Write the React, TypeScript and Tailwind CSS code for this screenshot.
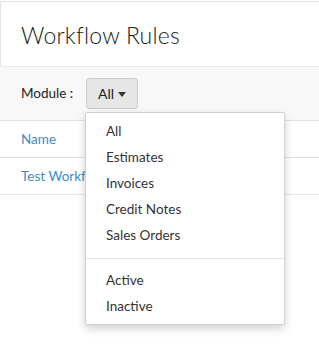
const menuItems = ["All", "Estimates", "Invoices", "Credit Notes", "Sales Orders"];
const statusItems = ["Active", "Inactive"];

const WorkflowRules = () => {
  return (
    <div
      className="relative w-full h-[352px] bg-white pt-px overflow-hidden text-[#333]"
      style={{ fontFamily: "Lato, 'Open Sans', sans-serif" }}
    >
      <div className="h-[65px] border-t border-l border-[#e3e3e3] flex items-center pl-[20px]">
        <h1 className="text-[23px] font-light text-[#1a1a1a] leading-none mt-[3px] tracking-[0.2px]">Workflow Rules</h1>
      </div>

      <div className="h-[54px] bg-[#f8f8f8] border-t border-[#ebebeb] flex items-center pl-[21px]">
        <span className="w-[52px] shrink-0 whitespace-nowrap text-[13.5px] text-[#222]">Module :</span>
        <button className="ml-[13px] w-[52px] h-[31px] bg-[#e6e6e6] border border-[#cacaca] rounded-[3px] flex items-center justify-center gap-[4px] text-[14px] text-[#222]">
          All
          <svg width="8" height="5" viewBox="0 0 8 5" className="mt-px">
            <path d="M0 0h8L4 5z" fill="#333" />
          </svg>
        </button>
      </div>

      <div className="border-t border-[#e0e0e0]">
        <div className="h-[37px] border-b border-[#e0e0e0] flex items-center pl-[21px] text-[13.5px] text-[#408cc4]">
          Name
        </div>
        <div className="h-[37px] border-b border-[#e8e8e8] flex items-center pl-[21px] text-[13.5px] text-[#408cc4]">
          Test Workflow
        </div>
      </div>

      <div className="absolute left-[85px] top-[112px] w-[200px] bg-white border border-[#cfcfcf] rounded-[2px] shadow-[0_4px_10px_rgba(0,0,0,0.18)] pt-[5px] pb-[5px]">
        {menuItems.map((item) => (
          <div key={item} className="h-[26px] flex items-center pl-[20px] text-[13.5px] text-[#333]">
            {item}
          </div>
        ))}
        <div className="mt-[10px] mb-[8px] border-t border-[#e2e2e2]" />
        {statusItems.map((item) => (
          <div key={item} className="h-[26px] flex items-center pl-[20px] text-[13.5px] text-[#333]">
            {item}
          </div>
        ))}
      </div>
    </div>
  );
};

export default function App() {
  return <WorkflowRules />;
}
